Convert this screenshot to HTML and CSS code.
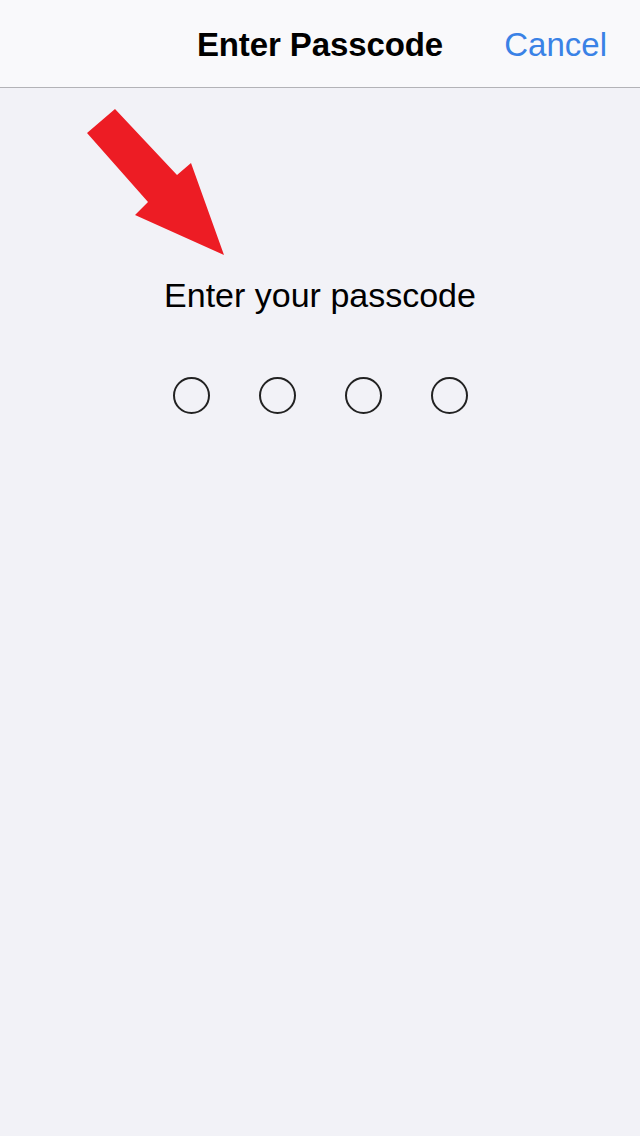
FILE: index.html
```html
<!DOCTYPE html>
<html>
<head>
<meta charset="utf-8">
<link rel="stylesheet" href="styles.css">
</head>
<body>
<header class="navbar">
  <div class="nav-title">Enter Passcode</div>
  <div class="nav-cancel">Cancel</div>
</header>
<main class="content">
  <svg class="arrow" width="640" height="270" viewBox="0 88 640 270">
    <polygon points="87,133 115,109 177,175 191,163 224,255 135,215 148,202" fill="#ed1c24"/>
  </svg>
  <div class="prompt">Enter your passcode</div>
  <div class="dots">
    <span class="dot"></span>
    <span class="dot"></span>
    <span class="dot"></span>
    <span class="dot"></span>
  </div>
</main>
</body>
</html>
```
FILE: styles.css
```css
html, body {
  margin: 0;
  padding: 0;
}
body {
  width: 640px;
  height: 1136px;
  background: #f2f2f7;
  font-family: "Liberation Sans", Arial, sans-serif;
  overflow: hidden;
}
.navbar {
  position: relative;
  height: 88px;
  background: #f9f9fb;
  border-bottom: 1px solid #b3b3b7;
  box-sizing: border-box;
  display: flex;
  align-items: center;
  justify-content: center;
  padding-top: 3px;
}
.nav-title {
  font-size: 33px;
  font-weight: bold;
  color: #000;
  letter-spacing: -0.1px;
}
.nav-cancel {
  position: absolute;
  right: 33px;
  top: 3px;
  height: 84px;
  display: flex;
  align-items: center;
  font-size: 33px;
  color: #3a82e6;
}
.content {
  position: relative;
  display: flex;
  flex-direction: column;
  align-items: center;
  padding-top: 187px;
}
.arrow {
  position: absolute;
  left: 0;
  top: 0;
}
.prompt {
  font-size: 34px;
  color: #000;
  line-height: 40px;
}
.dots {
  display: flex;
  gap: 49px;
  margin-top: 62px;
}
.dot {
  width: 33px;
  height: 33px;
  border: 2px solid #222;
  border-radius: 50%;
}
```
